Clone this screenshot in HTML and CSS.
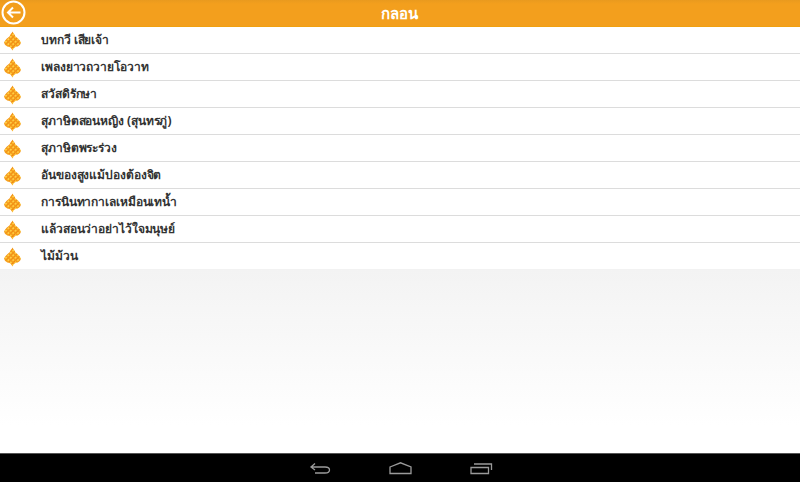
FILE: index.html
```html
<!DOCTYPE html>
<html lang="th">
<head>
<meta charset="utf-8">
<title>กลอน</title>
<link rel="stylesheet" href="styles.css">
</head>
<body>
<svg class="defs" width="0" height="0" aria-hidden="true">
  <defs>
    <pattern id="scale" width="3.600" height="3.600" patternUnits="userSpaceOnUse" patternTransform="rotate(45 9 10)">
      <rect width="3.600" height="3.600" fill="#ffc52e"/>
      <rect x="2.200" width="1.400" height="3.600" fill="#ee8612"/>
      <rect y="2.200" width="3.600" height="1.400" fill="#f4981a"/>
      <rect x=".5" y=".5" width="1" height="1" fill="#ffe374"/>
    </pattern>
    <symbol id="flame" viewBox="0 0 18 20">
      <path d="M9 0 C9.800 2 11.500 3 12 5 C14 6.500 16.500 8.500 18 11.500 C17.500 14 15 16 13 16 C11 16.500 10 18 9 20 C8 18 7 16.500 5 16 C3 16 .5 14 0 11.500 C1.500 8.500 4 6.500 6 5 C6.500 3 8.200 2 9 0 Z" fill="url(#scale)"/>
    </symbol>
  </defs>
</svg>
<div class="app">
  <header class="bar">
    <span class="back">
      <svg class="back-icon" viewBox="0 0 25 25"><circle cx="12.500" cy="12.500" r="11" fill="none" stroke="#fff" stroke-width="2"/><path d="M19.500 12.500 H7 M12 7.500 L7 12.500 L12 17.500" fill="none" stroke="#fff" stroke-width="2"/></svg>
    </span>
    <h1 class="title">กลอน</h1>
  </header>
  <ul class="list">
    <li class="row"><svg class="ico"><use href="#flame"/></svg><span>บทกวี เสียเจ้า</span></li>
    <li class="row"><svg class="ico"><use href="#flame"/></svg><span>เพลงยาวถวายโอวาท</span></li>
    <li class="row"><svg class="ico"><use href="#flame"/></svg><span>สวัสดิรักษา</span></li>
    <li class="row"><svg class="ico"><use href="#flame"/></svg><span>สุภาษิตสอนหญิง (สุนทรภู่)</span></li>
    <li class="row"><svg class="ico"><use href="#flame"/></svg><span>สุภาษิตพระร่วง</span></li>
    <li class="row"><svg class="ico"><use href="#flame"/></svg><span>อันของสูงแม้ปองต้องจิต</span></li>
    <li class="row"><svg class="ico"><use href="#flame"/></svg><span>การนินทากาเลเหมือนเทน้ำ</span></li>
    <li class="row"><svg class="ico"><use href="#flame"/></svg><span>แล้วสอนว่าอย่าไว้ใจมนุษย์</span></li>
    <li class="row"><svg class="ico"><use href="#flame"/></svg><span>ไม้ม้วน</span></li>
  </ul>
  <div class="fill"></div>
  <nav class="nav">
    <svg class="nav-back" viewBox="0 0 22 13"><path d="M2 5 H16 Q20.500 5 20.500 8 Q20.500 11 16 11 H6 M6 1.500 L2 5 L6 8" fill="none" stroke="#9a9a9a" stroke-width="1.300"/></svg>
    <svg class="nav-home" viewBox="0 0 23 13"><path d="M1 5 L11.500 .8 L22 5 V11.500 H1 Z" fill="none" stroke="#9a9a9a" stroke-width="1.300"/></svg>
    <svg class="nav-recent" viewBox="0 0 23 13"><path d="M1 5.500 H18.500 V11.500 H1 Z" fill="none" stroke="#9a9a9a" stroke-width="1.300"/><path d="M4 2 H21.500 V8" fill="none" stroke="#9a9a9a" stroke-width="1.300"/></svg>
  </nav>
</div>
</body>
</html>
```
FILE: styles.css
```css
* { box-sizing: border-box; }
html, body { margin: 0; padding: 0; height: 100%; }
.defs { position: absolute; }
.app {
  width: 800px; height: 482px; display: flex; flex-direction: column;
  font-family: "Noto Sans", "Liberation Sans", "DejaVu Sans", sans-serif;
}
.bar {
  height: 27px; flex: none; background: #f39f1d; position: relative;
  display: flex; align-items: center; justify-content: center;
  background-image: linear-gradient(#e99a1e, #f39f1d 4px);
  border-bottom: 1px solid #f0a010;
  padding-right: 1px;
}
.back { position: absolute; left: 1px; top: 0; height: 25px; }
.back-icon { display: block; width: 25px; height: 25px; }
.title { margin: 0; font-size: 15px; line-height: 27px; font-weight: 700; color: #fff; }
.list { list-style: none; margin: 0; padding: 0; background: #fff; flex: none; }
.row {
  height: 27px; display: flex; align-items: center; gap: 20px; padding-left: 4px;
  border-bottom: 1px solid #dcdcdc; font-size: 12px; font-weight: 700; color: #333;
  letter-spacing: -.1px;
}
.row span { margin-top: -2px; }
.row:last-child { border-bottom-color: #f2f2f2; }
.ico { width: 17px; height: 20px; flex: none; margin-top: 1px; }
.fill { flex: 1; background: linear-gradient(#f3f3f3, #fff 85%); }
.nav {
  height: 29px; flex: none; background: #000; border-top: 1px solid #555;
  padding-left: 2px;
  display: flex; align-items: center; justify-content: center; gap: 58px;
}
.nav-back { width: 22px; height: 13px; }
.nav-home { width: 23px; height: 13px; }
.nav-recent { width: 23px; height: 13px; }
```
